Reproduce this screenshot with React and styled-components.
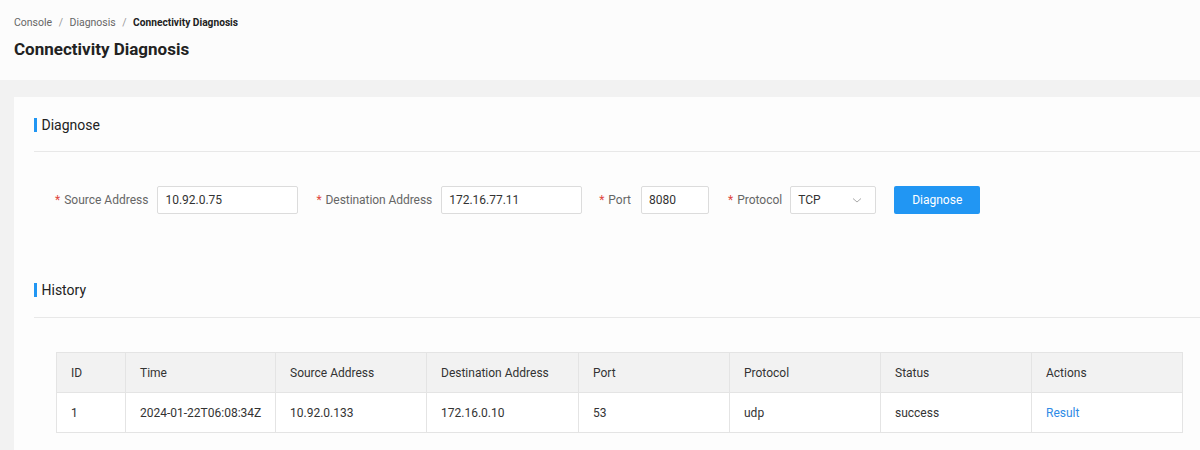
import React from "react";
import styled, { createGlobalStyle } from "styled-components";

const Global = createGlobalStyle`
  html, body { margin: 0; padding: 0; background: #f2f2f2; }
  body { font-family: Roboto, "Liberation Sans", sans-serif; color: #333; }
  * { box-sizing: border-box; }
`;

const Page = styled.div`
  width: 1200px;
  height: 450px;
  overflow: hidden;
  background: #f2f2f2;
`;

const Header = styled.header`
  height: 80px;
  background: #fcfcfc;
  padding: 15px 14px 0;
`;

const Breadcrumb = styled.nav`
  display: flex;
  align-items: center;
  gap: 6.5px;
  font-size: 10.5px;
  line-height: 16px;
  color: #666;
`;

const Crumb = styled.span`
  color: ${(p) => (p.$current ? "#222" : "#666")};
  font-weight: ${(p) => (p.$current ? 700 : 400)};
  font-size: ${(p) => (p.$current ? "10.2px" : "10.5px")};
`;

const Sep = styled.span`
  color: #999;
`;

const Title = styled.h1`
  margin: 7px 0 0;
  font-size: 17px;
  line-height: 22px;
  font-weight: 700;
  color: #222;
`;

const Main = styled.main`
  padding: 17px 0 0 14px;
`;

const Card = styled.section`
  background: #fdfdfd;
  padding: 16px 0 30px 20px;
  min-height: 360px;
`;

const SectionTitle = styled.h2`
  margin: 0;
  display: flex;
  align-items: center;
  gap: 5px;
  height: 24px;
  font-size: 14px;
  font-weight: 400;
  color: #222;
  &::before {
    content: "";
    width: 2.5px;
    height: 14px;
    background: #2196f3;
  }
`;

const Divider = styled.hr`
  margin: ${(p) => p.$m};
  border: 0;
  border-top: 1px solid #e8e8e8;
`;

const Form = styled.div`
  display: flex;
  align-items: center;
  padding-left: 21px;
  height: 28px;
`;

const Item = styled.label`
  display: flex;
  align-items: center;
  margin-right: ${(p) => p.$gap || 18}px;
  font-size: 12px;
  color: #666;
`;

const Label = styled.span`
  margin-right: ${(p) => p.$mr || 9}px;
  white-space: nowrap;
  letter-spacing: ${(p) => p.$ls || 0}px;
  &::before {
    content: "*";
    color: #e0483f;
    margin-right: 4px;
  }
`;

const Input = styled.div`
  width: ${(p) => p.$w}px;
  height: 28px;
  border: 1px solid #dcdcdc;
  border-radius: 2px;
  background: #fff;
  padding: 0 7px;
  display: flex;
  align-items: center;
  justify-content: space-between;
  font-size: 12px;
  color: #333;
`;

const Chevron = styled.svg`
  width: 10px;
  height: 10px;
  margin-right: 6px;
`;

const Button = styled.button`
  width: 86px;
  height: 28px;
  border: 0;
  border-radius: 2px;
  background: #2196f3;
  color: #fff;
  font-family: inherit;
  font-size: 12px;
`;

const TableWrap = styled.div`
  padding-left: 22px;
`;

const Table = styled.table`
  width: 1126px;
  border-collapse: collapse;
  table-layout: fixed;
  font-size: 12px;
  color: #333;
`;

const Th = styled.th`
  height: 40px;
  background: #f2f2f2;
  border: 1px solid #e4e4e4;
  text-align: left;
  font-weight: 400;
  padding: 0 14px;
  color: #333;
  white-space: nowrap;
`;

const Td = styled.td`
  height: 40px;
  background: #fff;
  border: 1px solid #e4e4e4;
  padding: 0 14px;
  color: #333;
  white-space: nowrap;
`;

const Link = styled.a`
  color: #2f8be6;
  text-decoration: none;
`;

const cols = [
  ["ID", 69],
  ["Time", 150],
  ["Source Address", 151],
  ["Destination Address", 152],
  ["Port", 151],
  ["Protocol", 151],
  ["Status", 151],
  ["Actions", 151],
];

export default function App() {
  return (
    <Page>
      <Global />
      <Header>
        <Breadcrumb>
          <Crumb>Console</Crumb>
          <Sep>/</Sep>
          <Crumb>Diagnosis</Crumb>
          <Sep>/</Sep>
          <Crumb $current>Connectivity Diagnosis</Crumb>
        </Breadcrumb>
        <Title>Connectivity Diagnosis</Title>
      </Header>
      <Main>
        <Card>
          <SectionTitle>Diagnose</SectionTitle>
          <Divider $m="14px 0 34px" />
          <Form>
            <Item>
              <Label>Source Address</Label>
              <Input $w={141}>10.92.0.75</Input>
            </Item>
            <Item $gap={17}>
              <Label $ls={-0.06}>Destination Address</Label>
              <Input $w={141}>172.16.77.11</Input>
            </Item>
            <Item $gap={19}>
              <Label $mr={10}>Port</Label>
              <Input $w={68}>8080</Input>
            </Item>
            <Item>
              <Label $mr={8}>Protocol</Label>
              <Input $w={86}>
                TCP
                <Chevron viewBox="0 0 10 10">
                  <path d="M1 3.5 L5 7 L9 3.5" fill="none" stroke="#aaa" strokeWidth="1" />
                </Chevron>
              </Input>
            </Item>
            <Button>Diagnose</Button>
          </Form>
          <div style={{ height: 64 }} />
          <SectionTitle>History</SectionTitle>
          <Divider $m="15px 0 34px" />
          <TableWrap>
            <Table>
              <colgroup>
                {cols.map(([n, w]) => (
                  <col key={n} style={{ width: w }} />
                ))}
              </colgroup>
              <thead>
                <tr>
                  {cols.map(([n]) => (
                    <Th key={n}>{n}</Th>
                  ))}
                </tr>
              </thead>
              <tbody>
                <tr>
                  <Td>1</Td>
                  <Td>2024-01-22T06:08:34Z</Td>
                  <Td>10.92.0.133</Td>
                  <Td>172.16.0.10</Td>
                  <Td>53</Td>
                  <Td>udp</Td>
                  <Td>success</Td>
                  <Td>
                    <Link href="#">Result</Link>
                  </Td>
                </tr>
              </tbody>
            </Table>
          </TableWrap>
        </Card>
      </Main>
    </Page>
  );
}
